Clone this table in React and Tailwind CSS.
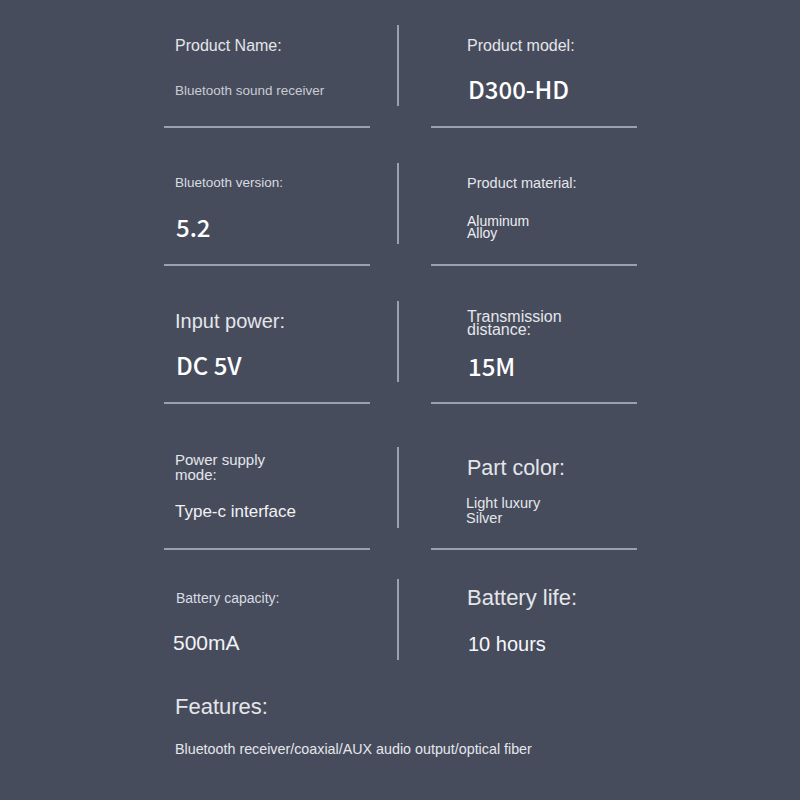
const rows = [
  {
    mt: "mt-[25px]",
    left: {
      label: <span className="text-[16px] text-[#e4e6ea] mt-[1px]">Product Name:</span>,
      value: <span className="text-[13.5px] text-[#c9ccd3] mt-[4px]">Bluetooth sound receiver</span>,
    },
    right: {
      label: <span className="text-[16px] text-[#e4e6ea] mt-[1px]">Product model:</span>,
      value: <span className="font-cjk text-[24px] font-medium text-white ml-[1px] -mt-[1px]">D300-HD</span>,
    },
  },
  {
    mt: "mt-[35px]",
    left: {
      label: <span className="text-[13.5px] text-[#d8dbe1] mt-[1px]">Bluetooth version:</span>,
      value: <span className="font-cjk text-[24px] font-medium text-white ml-[1px] -mt-[1px]">5.2</span>,
    },
    right: {
      label: <span className="text-[14.5px] text-[#e4e6ea] mt-[1px]">Product material:</span>,
      value: (
        <span className="text-[14px] leading-[12px] text-[#eceef1] -mt-[1px]">
          Aluminum
          <br />
          Alloy
        </span>
      ),
    },
  },
  {
    mt: "mt-[35px]",
    left: {
      label: <span className="text-[20px] text-[#e4e6ea] -mt-[1px]">Input power:</span>,
      value: <span className="font-cjk text-[24px] font-medium text-white ml-[1px] -mt-[1px]">DC 5V</span>,
    },
    right: {
      label: (
        <span className="text-[16px] leading-[13px] text-[#e4e6ea] mt-[3px]">
          Transmission
          <br />
          distance:
        </span>
      ),
      value: <span className="font-cjk text-[24px] font-medium text-white ml-[1px]">15M</span>,
    },
  },
  {
    mt: "mt-[43px]",
    left: {
      label: (
        <span className="text-[15px] leading-[15px] text-[#e4e6ea] -mt-[1px]">
          Power supply
          <br />
          mode:
        </span>
      ),
      value: <span className="text-[17px] text-[#f1f2f4]">Type-c interface</span>,
    },
    right: {
      label: <span className="text-[21.5px] text-[#e4e6ea] mt-[2px]">Part color:</span>,
      value: (
        <span className="text-[14.5px] leading-[15px] text-[#e4e6ea] -ml-[1px] -mt-[2px]">
          Light luxury
          <br />
          Silver
        </span>
      ),
    },
  },
  {
    mt: "mt-[29px]",
    left: {
      label: <span className="text-[14px] text-[#d8dbe1] ml-[1px] -mt-[2px]">Battery capacity:</span>,
      value: <span className="text-[21px] text-[#f1f2f4] -ml-[2px] -mt-[2px]">500mA</span>,
    },
    right: {
      label: <span className="text-[22px] text-[#e4e6ea] -mt-[4px]">Battery life:</span>,
      value: <span className="text-[20px] text-[#f7f8f9] ml-[1px] mt-[1px]">10 hours</span>,
    },
    last: true,
  },
];

const Cell = ({ label, value, pad }) => (
  <div className={`h-[81px] ${pad}`}>
    <div className="h-10 flex items-center">{label}</div>
    <div className="h-[49px] flex items-center">{value}</div>
  </div>
);

export default function App() {
  return (
    <div className="w-[800px] h-[800px] overflow-hidden bg-[#474c5d] font-['Liberation_Sans',Arial,sans-serif]">
      <style>{`.font-cjk{font-family:"Noto Sans CJK SC","Noto Sans",sans-serif}`}</style>
      <div className="pl-[164px] pt-0">
        {rows.map((r, i) => (
          <div key={i} className={r.mt}>
            <div className="grid grid-cols-[206px_61px_206px]">
              <Cell {...r.left} pad="pl-[11px]" />
              <div className="flex">
                <div className="ml-[27px] w-[2px] h-[81px] bg-[#9aa0ad]" />
              </div>
              <Cell {...r.right} pad="pl-[36px]" />
            </div>
            {!r.last && (
              <div className="mt-[20px] grid grid-cols-[206px_61px_206px]">
                <div className="h-[2px] bg-[#9aa0ad]" />
                <div />
                <div className="h-[2px] bg-[#9aa0ad]" />
              </div>
            )}
          </div>
        ))}

        {/* Features */}
        <div className="pl-[11px] mt-[33px]">
          <div className="text-[22px] leading-[28px] text-[#e4e6ea]">Features:</div>
          <div className="mt-[18px] text-[14.3px] text-[#e4e6ea]">
            Bluetooth receiver/coaxial/AUX audio output/optical fiber
          </div>
        </div>
      </div>
    </div>
  );
}
